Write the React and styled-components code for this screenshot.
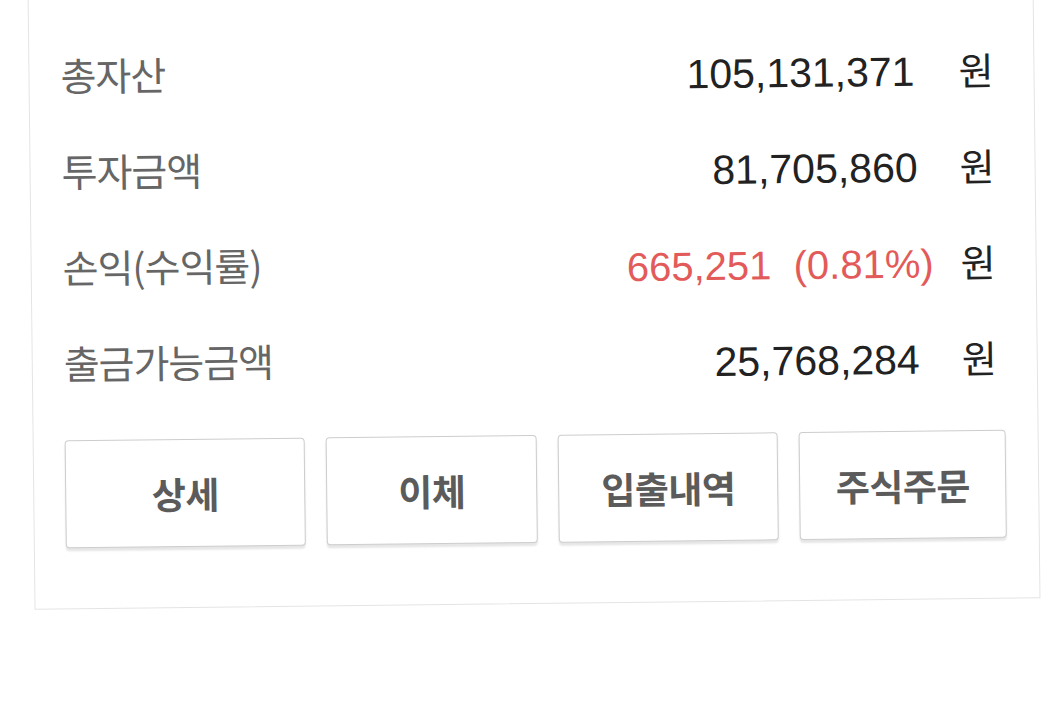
import styled, { createGlobalStyle } from "styled-components";

const GlobalStyle = createGlobalStyle`
  html, body {
    margin: 0;
    padding: 0;
    background: #ffffff;
    overflow: hidden;
  }
`;

const Page = styled.main`
  width: 1051px;
  height: 703px;
  padding-left: 31px;
  box-sizing: border-box;
`;

const Card = styled.section`
  width: 1006px;
  height: 620px;
  margin-top: -16px;
  box-sizing: border-box;
  padding: 40px 32px 0 31px;
  background: #ffffff;
  border: 1px solid #e4e4e4;
  transform: rotate(-0.65deg);
  display: flex;
  flex-direction: column;
`;

const Row = styled.div`
  height: 96px;
  display: flex;
  align-items: center;
  padding-right: 6px;
`;

const Label = styled.span`
  flex: 1;
  padding-bottom: 8px;
  font-family: "Noto Sans CJK KR", "Noto Sans", sans-serif;
  font-size: 39px;
  color: #666666;
  letter-spacing: -1px;
`;

const Value = styled.span`
  padding-top: 6px;
  font-family: "Liberation Sans", Arial, sans-serif;
  font-size: ${({ $red }) => ($red ? 40 : 41)}px;
  color: ${({ $red }) => ($red ? "#e35a5a" : "#222222")};
  margin-right: ${({ $gap }) => $gap}px;
  white-space: pre;
`;

const Unit = styled.span`
  width: 39px;
  font-family: "Noto Sans CJK KR", "Noto Sans", sans-serif;
  font-size: 38px;
  color: #222222;
  text-align: center;
`;

const Buttons = styled.div`
  display: flex;
  gap: 21px;
  margin-top: 26px;
`;

const Button = styled.button`
  flex: ${({ $grow }) => $grow} 1 0;
  height: 108px;
  padding: 0;
  background: #ffffff;
  border: 1px solid #cdcdcd;
  border-radius: 4px;
  box-shadow: 0 3px 2px rgba(0, 0, 0, 0.1);
  font-family: "Noto Sans CJK KR", "Noto Sans", sans-serif;
  font-weight: 700;
  font-size: 37px;
  color: #5b5b5b;
  letter-spacing: -0.5px;
`;

const rows = [
  { label: "총자산", value: "105,131,371", gap: 42 },
  { label: "투자금액", value: "81,705,860", gap: 40 },
  { label: "손익(수익률)", value: "665,251  (0.81%)", gap: 25, red: true },
  { label: "출금가능금액", value: "25,768,284", gap: 40 },
];

const actions = [
  { text: "상세", grow: 241 },
  { text: "이체", grow: 211 },
  { text: "입출내역", grow: 221 },
  { text: "주식주문", grow: 207 },
];

export default function App() {
  return (
    <Page>
      <GlobalStyle />
      <Card>
        {rows.map((r) => (
          <Row key={r.label}>
            <Label>{r.label}</Label>
            <Value $red={r.red} $gap={r.gap}>
              {r.value}
            </Value>
            <Unit>원</Unit>
          </Row>
        ))}
        <Buttons>
          {actions.map((a) => (
            <Button key={a.text} $grow={a.grow}>
              {a.text}
            </Button>
          ))}
        </Buttons>
      </Card>
    </Page>
  );
}
